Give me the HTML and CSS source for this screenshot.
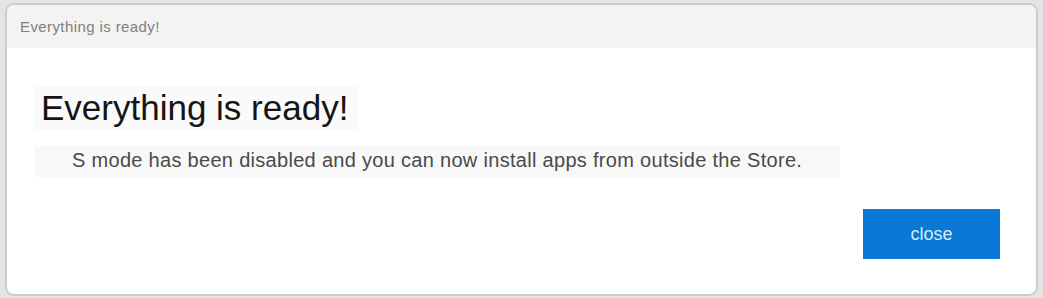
FILE: index.html
```html
<html>
<head>
    <link rel="stylesheet" href="styles.css">
</head>
<body>
    <div class="dialog">
        <div class="titlebar">Everything is ready!</div>
        <div class="content">
            <h1 class="heading">Everything is ready!</h1>
            <p class="message">S mode has been disabled and you can now install apps from outside the Store.</p>
            <div class="actions">
                <button class="button">close</button>
            </div>
        </div>
    </div>
</body>
</html>
```

FILE: styles.css
```css
body {
    margin: 0;
    padding: 3px 5px 2px 5px;
    background-color: #e4e4e4;
    font-family: "Liberation Sans", Arial, sans-serif;
    height: 100vh;
    box-sizing: border-box;
}
.dialog {
    height: 100%;
    box-sizing: border-box;
    background-color: #fff;
    border: 2px solid #cdcdcd;
    border-radius: 9px;
    overflow: hidden;
    display: flex;
    flex-direction: column;
}
.titlebar {
    height: 43px;
    background-color: #f3f3f3;
    color: #808080;
    font-size: 15px;
    line-height: 17px;
    letter-spacing: 0.4px;
    padding-left: 13px;
    padding-top: 13px;
    box-sizing: border-box;
}
.content {
    flex: 1;
    padding: 0 36px 0 28px;
    display: flex;
    flex-direction: column;
}
.heading {
    margin: 38px 0 0 0;
    padding: 2px 10px 2px 6px;
    align-self: flex-start;
    background-color: #fafafa;
    font-size: 35px;
    line-height: 40px;
    font-weight: normal;
    color: #151515;
}
.message {
    margin: 16px 0 0 0;
    padding: 3px 0 5px 37px;
    width: 805px;
    box-sizing: border-box;
    background-color: #f8f8f8;
    font-size: 20px;
    line-height: 23px;
    letter-spacing: 0.3px;
    color: #4a4a4a;
}
.actions {
    display: flex;
    justify-content: flex-end;
    margin-top: 32px;
}
.button {
    width: 137px;
    height: 50px;
    border: none;
    background-color: #0a78d6;
    color: #d6ebfc;
    font-family: "Liberation Sans", Arial, sans-serif;
    font-size: 18px;
    cursor: pointer;
}
```
